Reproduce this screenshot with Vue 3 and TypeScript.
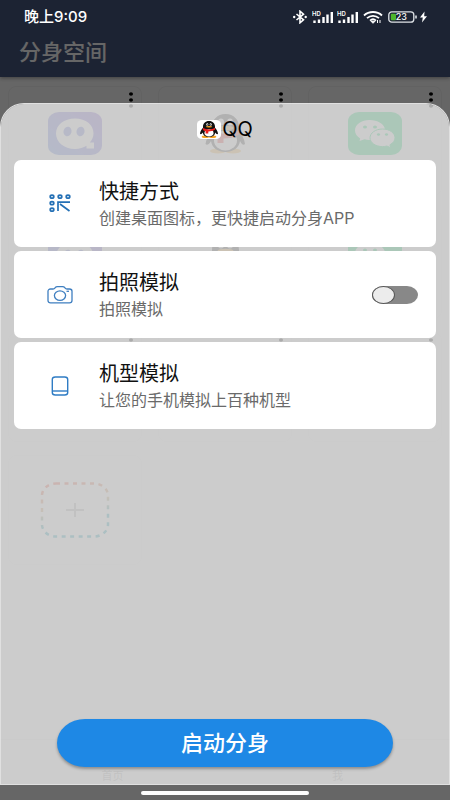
<script setup lang="ts">
import { ref } from 'vue'

type AppKind = 'chat' | 'penguin' | 'wechat'
type ActionIcon = 'shortcut' | 'camera' | 'device'

interface Action {
  id: ActionIcon
  title: string
  note: string
  toggle: boolean
}

const kinds: AppKind[] = ['chat', 'penguin', 'wechat']
const apps = [0, 1, 2].flatMap((row) => kinds.map((kind) => ({ id: `${kind}-${row}`, kind })))

const actions: Action[] = [
  { id: 'shortcut', title: '快捷方式', note: '创建桌面图标，更快捷启动分身APP', toggle: false },
  { id: 'camera', title: '拍照模拟', note: '拍照模拟', toggle: true },
  { id: 'device', title: '机型模拟', note: '让您的手机模拟上百种机型', toggle: false },
]

const tabs = ['首页', '我']
const photoMock = ref(false)
</script>

<template>
  <div class="screen">
    <div class="page">
      <header class="bar">
        <h1>分身空间</h1>
      </header>
      <main class="grid">
        <article v-for="app in apps" :key="app.id" class="tile">
          <svg class="kebab" viewBox="0 0 4 16" aria-hidden="true">
            <ellipse cx="2" cy="2" rx="2" ry="1.8" />
            <ellipse cx="2" cy="8" rx="2" ry="1.8" />
            <ellipse cx="2" cy="14" rx="2" ry="1.8" />
          </svg>
          <svg v-if="app.kind === 'chat'" class="logo" viewBox="0 0 54 43" aria-hidden="true">
            <defs>
              <linearGradient :id="'g-' + app.id" x1="0" y1="1" x2="1" y2="0">
                <stop offset="0" stop-color="#4f78e0" />
                <stop offset="1" stop-color="#7850d0" />
              </linearGradient>
            </defs>
            <rect width="54" height="43" rx="11" ry="9" :fill="`url(#g-${app.id})`" />
            <path d="M27 6.500C16 6.500 8 13 8 21.500S16 37 27 37c4.500 0 8.500-1.200 11.500-3.200V36.500h7.500v-6h-4.200c2.300-2.600 3.700-5.700 3.700-9C45.500 13 38 6.500 27 6.500Z" fill="#fff" />
            <ellipse cx="19.500" cy="19.500" rx="4" ry="4.800" transform="rotate(15 19.500 19.500)" fill="#5f6fd8" />
            <ellipse cx="32.500" cy="19.500" rx="4" ry="4.800" transform="rotate(15 32.500 19.500)" fill="#5f6fd8" />
          </svg>
          <svg v-else-if="app.kind === 'penguin'" class="logo" viewBox="0 0 54 43" aria-hidden="true">
            <ellipse cx="20" cy="39" rx="8" ry="2.500" fill="#f5b547" />
            <ellipse cx="35" cy="39" rx="8" ry="2.500" fill="#f5b547" />
            <path d="M27.500 2C19 2 14 8 14 15v4c-3 4-6 8-6.500 13 1.500 2 4 0 5.500-3 1 7 7 11 14.500 11S41 36 42 29c1.500 3 3.500 5 5 3-.5-5-3-9-6-13v-4C41 8 36 2 27.500 2Z" fill="#333" />
            <ellipse cx="27.500" cy="28.500" rx="11.500" ry="10" fill="#fff" />
            <ellipse cx="23" cy="10" rx="3" ry="3.600" fill="#fff" />
            <ellipse cx="32" cy="10" rx="3" ry="3.600" fill="#fff" />
            <ellipse cx="27.500" cy="16" rx="8" ry="2.300" fill="#f5b547" />
            <path d="M14 18c8 5 19 5 27 0v4.500c-5 3-10 4-15.500 4v4.500h-6v-5c-3 0-5-2-5.500-3Z" fill="#e33" />
          </svg>
          <svg v-else class="logo" viewBox="0 0 54 43" aria-hidden="true">
            <rect width="54" height="43" rx="11" ry="9" fill="#04d668" />
            <path d="M21.500 8C13.500 8 7 12.600 7 18.500c0 3.200 2 6 5.200 8L11.500 29l5-1.800c3.500.9 6 .9 9 0L37 17.500C36.500 12 29.500 8 21.500 8Z" fill="#fff" />
            <path d="M34.500 17c-7 0-12.500 4-12.500 8.800s5.500 8.800 12.500 8.800c1.500 0 3-.2 4.400-.6l4 1.800-1-3c3.200-1.700 5.100-4.200 5.100-7 0-4.800-5.500-8.800-12.500-8.800Z" fill="#fff" stroke="#04d668" stroke-width="1" />
            <g fill="#04d668">
              <ellipse cx="17" cy="15" rx="2" ry="1.600" />
              <ellipse cx="27" cy="15" rx="2" ry="1.600" />
              <ellipse cx="30.500" cy="22.500" rx="1.600" ry="1.300" />
              <ellipse cx="38.500" cy="22.500" rx="1.600" ry="1.300" />
            </g>
          </svg>
        </article>
        <article class="tile tile-add">
          <svg class="add" viewBox="0 0 70 56" aria-hidden="true">
            <defs>
              <linearGradient id="g-add" x1="0" y1="0" x2="0.3" y2="1">
                <stop offset="0" stop-color="#f0402c" />
                <stop offset="0.5" stop-color="#c9a060" />
                <stop offset="0.8" stop-color="#0a9bb0" />
              </linearGradient>
            </defs>
            <rect x="2" y="1.500" width="66" height="53" rx="14" ry="12" fill="none" stroke="url(#g-add)" stroke-width="2.500" stroke-dasharray="4 4.500" />
            <path d="M26 28h18M35 21v14" stroke="#aaa" stroke-width="2" />
          </svg>
        </article>
      </main>
      <nav class="tabs">
        <a v-for="tab in tabs" :key="tab" href="#">{{ tab }}</a>
      </nav>
    </div>

    <div class="overlay">
      <div class="status">
        <span class="clock">晚上9:09</span>
        <svg class="bt" viewBox="0 0 14 14" aria-hidden="true">
          <path d="M3.500 4 10.500 9.800 7 12.800V1.200l3.500 3L3.500 10" fill="none" stroke="#fff" stroke-width="1.600" />
          <circle cx="1.200" cy="7" r="1.200" fill="#fff" />
          <circle cx="12.700" cy="7" r="1.200" fill="#fff" />
        </svg>
        <svg v-for="n in 2" :key="n" class="signal" viewBox="0 0 22 14" aria-hidden="true">
          <text x="0" y="6" class="hd">HD</text>
          <path d="M2.500 10.500V13M7 9.500V13M11.500 7V13M15.500 4.500V13M19.800 2V13" stroke="#fff" stroke-width="2.400" />
        </svg>
        <svg class="wifi" viewBox="0 0 20 14" aria-hidden="true">
          <path d="M1 5.500C6 .8 14 .8 19 5.500M4 8.200C7.500 5 12.500 5 16 8.200M7 10.600c2-1.800 4-1.800 6 0" fill="none" stroke="#fff" stroke-width="1.800" />
          <path d="M8 11.300h4L10 13.300ZM14.500 10v3M17 10v3" fill="#fff" stroke="#fff" stroke-width="1" />
        </svg>
        <svg class="battery" viewBox="0 0 29 13" aria-hidden="true">
          <rect x="0.800" y="1.300" width="25" height="10.400" rx="3" fill="none" stroke="#dfe3e8" stroke-width="1.300" />
          <rect x="2.800" y="3.200" width="5.200" height="6.600" rx="1" fill="#4cb52c" />
          <path d="M28 5v3" stroke="#dfe3e8" stroke-width="1.600" />
          <text x="13.300" y="9.800" class="level">23</text>
        </svg>
        <svg class="bolt" viewBox="0 0 7 12" aria-hidden="true">
          <path d="M4.500.5 0 6.500h2.800L2 11.500l5-6.200H4.200Z" fill="#fff" />
        </svg>
      </div>

      <section class="sheet" aria-labelledby="sheet-title">
        <div class="sheet-head">
          <svg class="badge" viewBox="0 0 24 19" aria-hidden="true">
            <rect width="24" height="19" rx="5" ry="4" fill="#fff" />
            <ellipse cx="8.500" cy="16.800" rx="3.800" ry="1.300" fill="#f6a623" />
            <ellipse cx="15.500" cy="16.800" rx="3.800" ry="1.300" fill="#f6a623" />
            <path d="M12 1C8.200 1 6 3.500 6 6.500v1.300C4.500 9.500 3.200 11.500 3 13.800c.8 1 1.900 0 2.700-1.300C6.200 15.500 8.600 17 12 17s5.800-1.500 6.300-4.500c.8 1.300 1.900 2.300 2.700 1.300-.2-2.300-1.500-4.300-3-6V6.500C18 3.500 15.800 1 12 1Z" fill="#111" />
            <ellipse cx="12" cy="12.900" rx="4.600" ry="3.600" fill="#fff" />
            <ellipse cx="10.300" cy="4.500" rx="1" ry="1.200" fill="#fff" />
            <ellipse cx="13.700" cy="4.500" rx="1" ry="1.200" fill="#fff" />
            <circle cx="10.500" cy="4.700" r=".5" />
            <circle cx="13.500" cy="4.700" r=".5" />
            <ellipse cx="12" cy="6.800" rx="3.200" ry="0.800" fill="#f6a623" />
            <path d="M6 7.800c3.600 2.200 8.400 2.200 12 0v2c-2 1.200-4.200 1.600-6.700 1.600v2H8.600v-2.200C7.300 11 6.400 10.500 6 9.800Z" fill="#e81f1f" />
          </svg>
          <h2 id="sheet-title">QQ</h2>
        </div>

        <div class="actions">
          <component
            :is="action.toggle ? 'label' : 'button'"
            v-for="action in actions"
            :key="action.id"
            class="action"
          >
            <svg v-if="action.id === 'shortcut'" class="glyph" viewBox="0 0 26 24" aria-hidden="true">
              <g fill="none" stroke="#2470b5" stroke-width="1.700">
                <ellipse cx="5" cy="4.700" rx="1.800" ry="1.500" />
                <ellipse cx="13" cy="4.700" rx="1.800" ry="1.500" />
                <ellipse cx="21" cy="4.700" rx="1.800" ry="1.500" />
                <ellipse cx="5" cy="11.200" rx="1.800" ry="1.500" />
                <ellipse cx="5" cy="17.700" rx="1.800" ry="1.500" />
                <path d="M23 10.200H11V19M13 12l9.500 7" />
              </g>
            </svg>
            <svg v-else-if="action.id === 'camera'" class="glyph" viewBox="0 0 26 24" aria-hidden="true">
              <g fill="none" stroke="#3f7fc0" stroke-width="1.300">
                <path d="M3.500 6H6c1.300 0 1.600-.5 2.200-1.300C8.800 3.900 9.300 3.700 10.500 3.700h5c1.200 0 1.700.2 2.300 1C18.400 5.500 18.700 6 20 6h2.500C24 6 25 6.900 25 8.200v9.400c0 1.300-1 2.200-2.500 2.200h-19C2 19.800 1 18.900 1 17.600V8.200C1 6.900 2 6 3.500 6Z" />
                <ellipse cx="13" cy="12.600" rx="5.600" ry="4.700" />
                <path d="M19.500 8.300h2.500" />
              </g>
            </svg>
            <svg v-else class="glyph" viewBox="0 0 26 24" aria-hidden="true">
              <g fill="none" stroke="#2f7cc4" stroke-width="1.400">
                <rect x="5.300" y="3" width="15.400" height="18" rx="3" ry="2.500" />
                <path d="M5.300 17h15.400" />
              </g>
            </svg>
            <span class="words">
              <span class="name">{{ action.title }}</span>
              <span class="note">{{ action.note }}</span>
            </span>
            <input v-if="action.toggle" v-model="photoMock" class="switch" type="checkbox" role="switch" />
          </component>
        </div>

        <button class="launch">启动分身</button>
      </section>
      <div class="gesture"><span class="pill"></span></div>
    </div>
  </div>
</template>

<style>
body {
  margin: 0;
}
</style>

<style scoped>
.screen {
  position: relative;
  min-height: 100vh;
  display: flex;
  flex-direction: column;
  font-family: Inter, 'Noto Sans CJK SC', sans-serif;
  background: #fff;
}
h1,
h2 {
  margin: 0;
  font-weight: 400;
}
.page {
  flex: 1;
  display: flex;
  flex-direction: column;
}
.bar {
  height: 77px;
  box-sizing: border-box;
  padding: 36px 19px 0;
  background: #48577f;
  box-shadow: 0 1px 4px rgba(0, 0, 0, 0.4);
}
.bar h1 {
  font-size: 22px;
  line-height: 32px;
  font-weight: 500;
  color: #fff;
}
.grid {
  flex: 1;
  display: grid;
  grid-template-columns: repeat(3, 1fr);
  grid-auto-rows: 110px;
  gap: 13px 16px;
  padding: 9px 8px;
}
.tile {
  position: relative;
  box-sizing: border-box;
  display: flex;
  justify-content: center;
  align-items: flex-start;
  padding-top: 25px;
  border: 1px solid #f6f6f6;
  border-radius: 8px;
}
.tile-add {
  align-items: center;
  padding-top: 0;
}
.kebab {
  position: absolute;
  top: 5px;
  right: 8px;
  width: 4px;
  height: 16px;
}
.logo {
  width: 54px;
  height: 43px;
}
.add {
  width: 70px;
  height: 56px;
}
.tabs {
  display: flex;
  height: 61px;
  box-sizing: border-box;
  padding-top: 28px;
  border-top: 1px solid #ececec;
}
.tabs a {
  flex: 1;
  text-align: center;
  font-size: 11px;
  line-height: 16px;
  color: #aaa;
  text-decoration: none;
}
.overlay {
  position: absolute;
  inset: 0;
  display: flex;
  flex-direction: column;
  background: rgba(0, 0, 0, 0.6);
}
.status {
  height: 103px;
  box-sizing: border-box;
  display: flex;
  align-items: flex-start;
  padding: 10px 23px 0 24px;
}
.status svg {
  flex: none;
  height: 14px;
}
.clock {
  flex: 1;
  font-size: 15px;
  line-height: 14px;
  font-weight: 500;
  color: #fff;
}
.status .bt {
  width: 14px;
  margin-right: 5px;
}
.status .signal {
  width: 22px;
  margin-right: 3px;
}
.status .wifi {
  width: 20px;
  margin: 0 5px 0 1px;
}
.status .battery {
  width: 29px;
  margin-right: 3px;
}
.status .bolt {
  width: 7px;
}
.hd {
  font-size: 6px;
  font-weight: 600;
  fill: #fff;
}
.level {
  font-size: 9px;
  font-weight: 500;
  text-anchor: middle;
  fill: #fff;
}
.sheet {
  flex: 1;
  display: flex;
  flex-direction: column;
  padding: 0 13px 17px;
  border: 1px solid rgba(255, 255, 255, 0.8);
  border-radius: 24px 24px 0 0;
  background: rgba(255, 255, 255, 0.67);
  background-clip: padding-box;
}
.sheet-head {
  display: flex;
  align-items: center;
  justify-content: center;
  gap: 1px;
  height: 50px;
  padding-bottom: 6px;
}
.badge {
  width: 24px;
  height: 19px;
}
.sheet-head h2 {
  font-size: 20px;
  line-height: 24px;
  color: #000;
}
.actions {
  display: flex;
  flex-direction: column;
  gap: 4px;
}
.action {
  display: flex;
  align-items: center;
  box-sizing: border-box;
  width: 100%;
  min-height: 87px;
  padding: 1px 18px 0 33px;
  border: 0;
  border-radius: 7px;
  background: #fff;
  font-family: inherit;
  text-align: left;
}
.glyph {
  flex: none;
  width: 26px;
  height: 24px;
  margin-right: 26px;
}
.words {
  flex: 1;
  display: flex;
  flex-direction: column;
}
.name {
  font-size: 20px;
  line-height: 28px;
  color: #111;
}
.note {
  font-size: 16px;
  line-height: 24px;
  color: #6a6a6a;
}
.switch {
  appearance: none;
  flex: none;
  display: flex;
  width: 46px;
  height: 18px;
  margin: 0;
  border-radius: 11px / 9px;
  background: #888;
}
.switch::before {
  content: '';
  width: 23px;
  height: 18px;
  box-sizing: border-box;
  border: 1px solid #555;
  border-radius: 50%;
  background: #ececec;
}
.switch:checked {
  justify-content: flex-end;
  background: #1e88e5;
}
.launch {
  height: 48px;
  margin: auto 43px 0;
  border: 0;
  border-radius: 28px / 24px;
  background: #1e88e5;
  box-shadow: 0 2px 3px rgba(0, 0, 0, 0.3);
  font-family: inherit;
  font-size: 22px;
  line-height: 32px;
  font-weight: 500;
  color: #fff;
}
.gesture {
  display: flex;
  justify-content: center;
  height: 15px;
}
.pill {
  width: 168px;
  height: 4px;
  margin-top: 6px;
  border-radius: 2px;
  background: #fff;
}
</style>
